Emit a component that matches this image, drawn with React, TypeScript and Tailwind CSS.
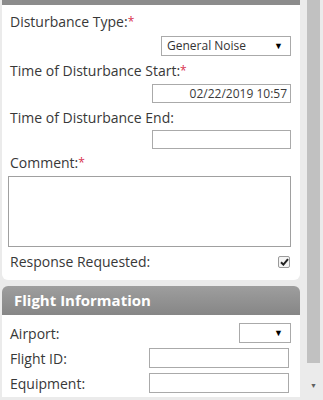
const font = { fontFamily: '"Open Sans", "Liberation Sans", sans-serif' };

const Req = () => <span className="align-top text-[12px] text-[#d9314f]">*</span>;

const SelectBox = ({ value, className }: { value?: string; className: string }) => (
  <div className={`flex items-center justify-between border border-[#aaaaaa] bg-white pl-[5px] pr-[7px] text-[12px] text-[#333] ${className}`}>
    <span>{value}</span>
    <span className="text-[9px] text-black">▼</span>
  </div>
);

const TextBox = ({ value, className }: { value?: string; className: string }) => (
  <div className={`border border-[#aaaaaa] bg-white px-[3px] text-right text-[12px] leading-[17px] text-[#3a3a3a] ${className}`}>
    {value}
  </div>
);

export default function App() {
  return (
    <div className="flex h-[400px] w-[323px] overflow-hidden bg-[#ebebeb]" style={font}>
      <div className="w-[306px] pl-[2px]">
        <div className="w-[298px]">
          <div className="h-[5px] bg-[#8c8c8c]" />
          <div className="rounded-b-md bg-white pl-[6px] pr-[9px] pt-[7px] pb-[8px] text-[14px] text-[#383838]">
            <div className="h-[20px] pl-[2px] leading-[20px]">
              Disturbance Type:<Req />
            </div>
            <div className="mt-[4px] flex justify-end">
              <SelectBox value="General Noise" className="h-[20px] w-[130px]" />
            </div>
            <div className="mt-[5px] h-[20px] pl-[2px] leading-[20px]">
              Time of Disturbance Start:<Req />
            </div>
            <div className="mt-[3px] flex justify-end">
              <TextBox value="02/22/2019 10:57" className="h-[19px] w-[139px]" />
            </div>
            <div className="mt-[5px] h-[20px] pl-[2px] leading-[20px]">Time of Disturbance End:</div>
            <div className="mt-[2px] flex justify-end">
              <TextBox className="h-[19px] w-[139px]" />
            </div>
            <div className="mt-[4px] h-[20px] pl-[2px] leading-[20px]">
              Comment:<Req />
            </div>
            <div className="mt-[3px] h-[71px] w-[283px] border border-[#a0a0a0]" />
            <div className="mt-[5px] flex h-[20px] items-center justify-between pl-[2px]">
              <span className="leading-[20px]">Response Requested:</span>
              <span className="mr-[1px] flex h-[12px] w-[12px] items-center justify-center rounded-[2px] border border-[#9a9a9a] bg-[#f4f4f4]">
                <svg width="9" height="8" viewBox="0 0 9 8">
                  <path d="M1 4.2 L3.4 6.6 L8 1.2" fill="none" stroke="#222" strokeWidth="2" />
                </svg>
              </span>
            </div>
          </div>
        </div>
        <div className="mt-[6px] w-[298px]">
          <div className="h-[29px] rounded-t-md bg-gradient-to-b from-[#9e9e9e] to-[#868686] pl-[12px] text-[15px] font-bold leading-[29px] text-white">
            Flight Information
          </div>
          <div className="flex flex-col gap-[5px] bg-white pl-[6px] pr-[9px] pt-[8px] pb-[4px] text-[14px] text-[#383838]">
            <div className="flex h-[20px] items-center justify-between pl-[2px]">
              <span>Airport:</span>
              <SelectBox className="h-[20px] w-[52px]" />
            </div>
            <div className="flex h-[20px] items-center justify-between pl-[2px]">
              <span>Flight ID:</span>
              <TextBox className="mr-[2px] h-[20px] w-[140px]" />
            </div>
            <div className="flex h-[20px] items-center justify-between pl-[2px]">
              <span>Equipment:</span>
              <TextBox className="mr-[2px] h-[20px] w-[140px]" />
            </div>
          </div>
        </div>
      </div>
      <div className="flex w-[17px] flex-col bg-[#ebebeb]">
        <div className="ml-[1px] h-[363px] w-[13px] bg-[#c1c1c1]" />
        <div className="mt-[19px] ml-[4px] text-[7px] leading-[8px] text-[#606060]">▼</div>
      </div>
    </div>
  );
}
